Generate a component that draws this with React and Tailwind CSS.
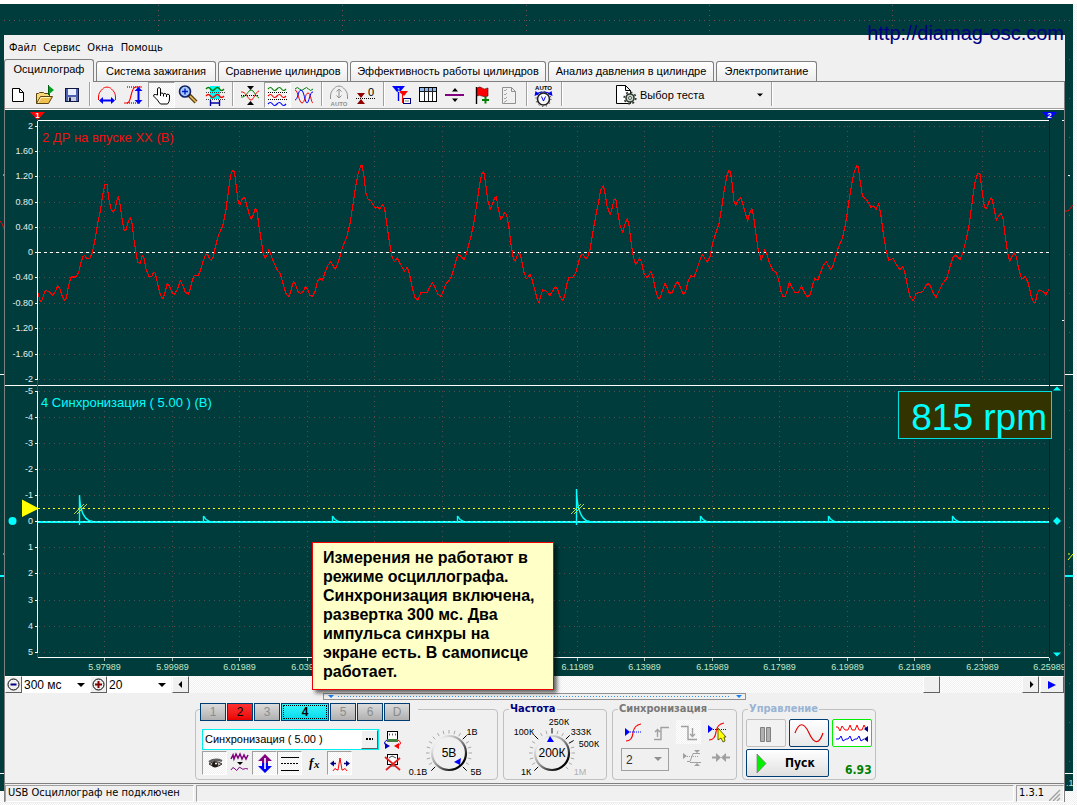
import React from "react";

const TEAL = "#003c3c";
const PATTERN = "bg-[repeating-conic-gradient(#ffffff_0_25%,#f0f0f0_0_50%)] bg-[length:2px_2px]";
const UI = "font-['Liberation_Sans',Arial,sans-serif]";
const TAHOMA = "font-['DejaVu_Sans_Condensed','Noto_Sans',sans-serif]";

/* Intake pressure samples, three consecutive segments at 1/3 px resolution. */
const SEG_A = "114,578 120,603 125,603 131,585 136,571 147,575 158,585 166,575 173,557 180,567 187,590 194,601 199,594 205,560 213,531 227,531 236,517 243,488 249,470 254,467 261,477 270,474 276,460 284,425 293,370 301,332 308,285 315,252 321,254 327,300 333,327 340,338 346,325 351,300 355,290 360,312 366,355 372,390 378,390 384,367 391,352 396,370 402,420 409,465 414,488 420,490 427,467 432,475 438,507 447,530 455,530 461,517 466,520 473,552 481,585 489,596 495,578 502,550 508,558 516,578 524,582 532,568 541,542 548,555 556,577 565,583 571,565 577,540 583,526 594,528 601,512 610,482 617,463 622,463 628,475 634,481 640,470 645,445 655,407 668,378 677,335 685,275 692,225 697,211 703,214 709,260 715,310 720,314 726,298 734,292 740,315 748,343 754,357 760,345 766,325 771,335 778,385 785,430 790,463 796,475 801,465 806,450 812,462 820,485 832,510 841,522 850,555 859,583 867,589 873,572 880,545 886,552 894,575 902,580 910,574 917,559 923,568 930,586 938,589 945,575 952,545 958,535 967,541 973,523 983,497 992,485 999,497 1006,508 1013,490 1020,470";
const SEG_B = "0,470 8,440 20,412 30,370 38,320 46,265 54,222 62,198 67,198 72,230 78,280 84,297 92,302 100,315 107,325 112,320 118,328 122,322 128,313 134,325 140,370 148,425 156,470 163,485 172,474 180,490 193,513 202,502 208,520 216,560 225,592 233,601 243,578 262,576 270,560 277,549 284,560 294,583 302,589 308,578 317,553 332,535 341,508 350,475 356,465 364,470 372,478 379,463 385,438 393,410 402,365 410,315 418,260 425,222 431,214 437,250 443,300 451,328 458,310 464,294 469,290 474,322 482,357 489,348 494,337 500,345 507,385 514,440 520,475 526,484 532,465 538,458 544,475 551,515 559,536 570,524 576,538 585,572 592,600 597,608 603,585 608,570 618,573 630,586 637,575 646,559 653,568 660,590 668,601 674,588 680,553 687,532 698,532 707,520 716,485 724,464 729,463 736,476 743,472 750,448 758,400 766,355 774,315 782,270 790,257 796,285 801,318 811,344 817,322 822,298 827,296 833,335 840,375 848,398 854,375 862,355 867,375 873,425 880,470 887,494 893,485 899,474 905,488 911,520 922,533 932,516 938,527 945,563 953,592 959,598 966,575 975,550 981,562 988,580 997,577 1005,556 1012,544 1020,560 1030,584 1037,575 1045,540 1053,527 1063,530 1070,510 1080,480";
const SEG_C = "0,480 7,463 14,475 22,486 30,470 38,430 48,397 57,370 64,330 72,275 80,230 86,211 91,214 97,255 102,305 107,316 114,302 122,292 128,310 136,340 143,363 149,340 155,325 160,345 167,395 174,445 184,481 189,465 194,448 200,460 208,488 218,510 229,518 236,540 243,575 249,589 256,588 262,570 268,545 275,560 284,577 295,577 305,558 312,575 322,592 331,583 339,550 345,536 353,541 360,522 370,495 379,485 386,498 392,508 398,500 407,470 415,442 427,415 437,370 445,315 453,265 461,222 470,197 475,200 480,240 487,288 498,297 513,322 520,317 528,328 536,310 542,340 550,400 558,450 566,480 580,476 590,495 600,509 608,499 614,515 622,555 630,590 640,602 648,580 668,575 676,560 684,549 692,560 701,583 708,592 717,573 728,550 740,537 750,500 760,470 767,465 780,478 788,460 800,412 808,370 816,310 824,250 833,221 840,222 846,270 853,320 859,326 867,305 875,292 881,320 889,361 896,348 903,340 909,355 916,410 923,460 929,485 936,470 942,459 949,470 956,505 965,538 976,529 985,550 994,590 1000,606 1006,607 1012,580 1018,569 1030,575 1037,585 1047,568";

const UPPER = [["2", 126], ["1.60", 151], ["1.20", 176], ["0.80", 202], ["0.40", 227], ["0", 252], ["-0.40", 277], ["-0.80", 303], ["-1.20", 328], ["-1.60", 354], ["-2", 379]];
const LOWER = [["-5", 391], ["-4", 417], ["-3", 443], ["-2", 469], ["-1", 495], ["0", 521], ["1", 547], ["2", 573], ["3", 600], ["4", 626], ["5", 652]];
/* Time marks; the ones that lie wholly under the note carry no caption. */
const TIMES = [["5.97989", 104], ["5.99989", 172], ["6.01989", 239], ["6.03989", 307], ["", 374], ["", 442], ["", 509], ["6.11989", 577], ["6.13989", 644], ["6.15989", 712], ["6.17989", 779], ["6.19989", 847], ["6.21989", 914], ["6.23989", 982], ["6.25989", 1049]];
const SMALL_PULSES = [203, 332, 457, 700, 828, 952];
const SYNC_PULSES = [[79, 495], [576, 489]];

function Chart() {
  return (
    <svg className="block w-full" viewBox="5 110 1059 566" fontFamily="'Liberation Sans', Arial, sans-serif">
      <rect x="5" y="110" width="1059" height="566" fill={TEAL} />
      <g stroke="#5c4a4a" strokeWidth="1" shapeRendering="crispEdges" strokeDasharray="1 4">
        {[...UPPER, ...LOWER].map(([t, y]) => <path key={t + y} d={`M39 ${y + 0.5}H1049`} />)}
        {TIMES.slice(0, 14).map(([, x]) => <path key={x} d={`M${x + 0.5} 126V380M${x + 0.5} 391V655`} />)}
      </g>
      <g shapeRendering="crispEdges" strokeWidth="1" fill="none">
        <path d="M37.5 120V380M37.5 391V657M37 120.5H1049M5 385.5H1063M37 657.5H1049M1062 120.5h2M1062 320.5h2" stroke="#fff" />
        {[...UPPER, ...LOWER].map(([t, y]) => <path key={t + y} d={`M35 ${y + 0.5}h3`} stroke="#fff" />)}
        {TIMES.map(([, x]) => <path key={x} d={`M${x + 0.5} 658v3`} stroke="#b0c0b0" />)}
        <path d="M37.5 117v4M37.5 380v11M37.5 653v5" stroke="#f00" />
        <path d="M1049.5 118V657" stroke="#0000e0" />
        <path d="M38 252.5H1049" stroke="#fff" strokeDasharray="3 3" />
        <path d="M38 508.5H1049" stroke="#ff0" strokeDasharray="2 3" />
      </g>
      <g fill="none" stroke="#ff0000" shapeRendering="crispEdges">
        {[[0, SEG_A], [340, SEG_B], [700, SEG_C]].map(([dx, pts]) => (
          <g key={dx} transform={`translate(${dx} 100) scale(0.33333)`}><polyline points={pts} strokeWidth="3.4" strokeLinejoin="round" /></g>
        ))}
      </g>
      <path d="M38 522H1049" stroke="#0ff" strokeWidth="2" shapeRendering="crispEdges" />
      <path d="M38 521.5H1049" stroke="#fff" strokeDasharray="2 3" shapeRendering="crispEdges" opacity=".6" />
      {SYNC_PULSES.map(([x, y]) => (
        <g key={x} fill="none">
          <path d={`M${x + 0.5} 525V${y}C${x + 1} 510 ${x + 5} 521 ${x + 14} 521.500`} stroke="#0ff" strokeWidth="1.400" />
          <path d={`M${x - 5} 514l10-10M${x - 2} 514l10-10`} stroke="#c8e850" strokeWidth=".9" />
        </g>
      ))}
      {SMALL_PULSES.map((x) => <path key={x} d={`M${x + 0.5} 522v-6q2 4 6 5.500`} fill="none" stroke="#0ff" strokeWidth="1.400" />)}
      <path d="M22 499.500L39 508.500L22 517z" fill="#ff0" />
      <circle cx="12.500" cy="521" r="4" fill="#0ff" />
      <path d="M1057 517l4 4-4 4-4-4zM1053 390.500l4-4 4 4zM1053 652.500h8l-4 4z" fill="#0ff" />
      <path d="M30 112h15l-7.500 8z" fill="#f00" />
      <path d="M1042 112h15l-7.500 8z" fill="#00f" />
      <g fill="#fff" fontSize="8" fontWeight="bold" textAnchor="middle"><text x="37.500" y="118">1</text><text x="1049.500" y="118">2</text></g>
      <g fill="#e0f0ec" fontSize="9" textAnchor="end">
        {[...UPPER, ...LOWER].map(([t, y]) => <text key={t + y} x="33" y={y + 3}>{t}</text>)}
      </g>
      <g fill="#c0e8c8" fontSize="9" textAnchor="middle">
        {TIMES.filter(([t]) => t).map(([t, x]) => <text key={t} x={x + 0.5} y="670">{t}</text>)}
      </g>
      <text x="42" y="142" fontSize="13" fill="#f01010">2 ДР на впуске ХХ (В)</text>
      <text x="41" y="407" fontSize="13" fill="#0ff">4 Синхронизация ( 5.00 ) (В)</text>
    </svg>
  );
}

const S = ({ w = 27, h = 26, children, className = "" }) => (
  <svg width={w} height={h} viewBox={`0 0 ${w} ${h}`} fill="none" className={`shrink-0 ${className}`}>{children}</svg>
);

function Tool({ label, pressed, children }) {
  return (
    <button aria-label={label} aria-pressed={pressed ? true : undefined}
      className={`h-[26px] w-[27px] shrink-0 ${pressed ? `border border-t-[#a0a0a0] border-l-[#a0a0a0] border-r-white border-b-white ${PATTERN}` : ""}`}>
      <S className={pressed ? "-m-px" : ""}>{children}</S>
    </button>
  );
}
const Sep = () => <div className="mx-[3px] h-6 w-[2px] shrink-0 border-r border-l border-l-[#a0a0a0] border-r-white" />;

const WAVE = (y, a = 3) => `M4 ${y}q2.500 ${-a} 4.500 0t4.500 0 4.500 0 4.500 0`;

function Toolbar() {
  return (
    <div className="flex h-[27px] items-start border-b border-[#a0a0a0] bg-[#f0f0f0]">
      <Tool label="Новый"><path d="M7.500 6.500h7l4 4v9h-11zM14.500 6.500v4h4" fill="#fff" stroke="#000" /></Tool>
      <Tool label="Открыть">
        <path d="M4.500 21.500v-10h2l1-1h4l1 1h5v3" fill="#f8d878" stroke="#5a4410" />
        <path d="M4.500 21.500l4-7h12l-4 7z" fill="#f0c050" stroke="#5a4410" /><path d="M6 21l3-5.500h9" stroke="#fff4c0" />
        <path d="M16 3l6 5-6 5z" fill="#00a020" /><path d="M16.500 3v10" stroke="#006010" />
      </Tool>
      <Tool label="Сохранить">
        <rect x="6.500" y="6.500" width="13" height="13" fill="#5060b0" stroke="#101840" /><rect x="9" y="7" width="8" height="6" fill="#e8f0ff" /><rect x="9" y="15" width="8" height="4" fill="#c8d0e0" /><rect x="10" y="15.500" width="2" height="3.500" fill="#101840" />
      </Tool>
      <Sep />
      <Tool label="Растянуть по времени">
        <path d="M4.500 18v-3c0-4 2-6 4-8 2-2.500 7-2.500 9 0 2 2 4 4 4 8v3" stroke="#f00" /><path d="M7 18.500h12" stroke="#00f" strokeWidth="2" /><path d="M5 18.500l4-3.500v7zM21 18.500l-4-3.500v7z" fill="#00f" />
      </Tool>
      <Tool label="Растянуть по амплитуде">
        <path d="M6 5h14M6 21h14" stroke="#000" strokeDasharray="1 1" /><path d="M3 21h3c5 0 3-16 9-16h6" stroke="#f00" strokeWidth="1.200" /><path d="M17.500 8v11" stroke="#00f" strokeWidth="2" /><path d="M17.500 5l4 4h-8zM17.500 22l4-4h-8z" fill="#00f" />
      </Tool>
      <Tool label="Рука" pressed>
        <path d="M9.500 13V6.500q1.500-2 3 0v5q1.500-1.500 3 .5 1.500-1.500 3 .5 1.500-1 3 .5v4q0 3-2 5h-7q-2-2-3-4l-4-4q0-2 2-1.500z" fill="#fff" stroke="#000" /><path d="M12.500 11v3M15.500 12v2.500M18.500 13v2" stroke="#000" />
      </Tool>
      <Tool label="Лупа">
        <path d="M14 13l7 7" stroke="#604010" strokeWidth="4" /><path d="M15 14l6 6" stroke="#e8c060" strokeWidth="1.600" /><circle cx="10" cy="9.500" r="5.500" fill="#a8c8ff" stroke="#102060" strokeWidth="1.600" /><path d="M7 9.500h6M10 6.500v6" stroke="#0020c0" strokeWidth="1.400" />
      </Tool>
      <Tool label="Измерения">
        <rect x="8" y="4" width="10" height="13" fill="#00f8f8" /><path d={WAVE(7)} stroke="#008000" strokeWidth="1.400" /><path d="M4 10.500h19M4 17.500h19" stroke="#404040" strokeDasharray="1 1" /><path d={WAVE(14)} stroke="#f00" strokeWidth="1.400" /><path d="M8.500 18v6M17.500 18v6M9 21h8" stroke="#0000a0" strokeWidth="1.400" />
      </Tool>
      <Sep />
      <Tool label="Совместить">
        <path d="M4 15c5 1 7-7 10-7s4 6 8 8" stroke="#008000" /><path d="M4 10c5-1 7 8 10 8s4-8 8-9" stroke="#f00" /><path d="M4 13.500h18" stroke="#000" strokeDasharray="1 1" /><path d="M10 4h7l-3.500 4zM10 23h7l-3.500-4z" fill="#000" />
      </Tool>
      <Tool label="Разнести" pressed>
        <path d={WAVE(7)} stroke="#008000" strokeWidth="1.200" /><path d={WAVE(14)} stroke="#f00" strokeWidth="1.200" /><path d={WAVE(22)} stroke="#00f" strokeWidth="1.200" /><path d="M4 10.500h19M4 17.500h19" stroke="#000" strokeDasharray="1 1" />
      </Tool>
      <Tool label="Наложить">
        <path d={WAVE(7)} stroke="#008000" /><path d="M4 8c3 0 4 13 7 13s3-10 6-10 3 10 5 10" stroke="#f00" /><path d="M4 18c3 0 3-10 6-10s4 13 6 13 3-12 6-11" stroke="#00f" />
      </Tool>
      <Sep />
      <Tool label="Автомасштаб">
        <path d="M4.500 17v-3c0-4 2-6 4-8 2-2.500 7-2.500 9 0 2 2 4 4 4 8v3M13 7v9M10.500 9.500L13 7l2.500 2.500M10.500 13.500L13 16l2.500-2.500" stroke="#909090" />
        <text x="13" y="24" fontSize="6" fontWeight="bold" textAnchor="middle" fill="#909090" fontFamily="Liberation Sans">AUTO</text>
      </Tool>
      <Tool label="Установить ноль">
        <path d="M3 16.500h19" stroke="#000" strokeDasharray="1 1" /><path d="M4 11h8l-4 5zM4 22h8l-4-5z" fill="#900000" /><text x="15" y="14" fontSize="11" fill="#000" fontFamily="Liberation Sans">0</text>
      </Tool>
      <Sep />
      <Tool label="Маркеры">
        <path d="M4 4h13l-5 6H9z" fill="#00f" /><path d="M10.500 5v14" stroke="#00f" strokeWidth="1.400" /><path d="M10 9h10l-4 5z" fill="#f00" /><path d="M14.500 10v11" stroke="#f00" /><text x="9" y="10" fontSize="6" fill="#fff" fontFamily="Liberation Sans">1</text><rect x="15.500" y="16.500" width="7" height="5" fill="#fff" stroke="#000080" /><path d="M17 19h4" stroke="#808080" />
      </Tool>
      <Tool label="Таблица">
        <rect x="4.500" y="5.500" width="17" height="14" fill="#fff" stroke="#000" /><rect x="5" y="6" width="16" height="3" fill="#90b8f0" /><path d="M5 9.500h16M9.500 6v13M13.500 6v13M17.500 6v13" stroke="#202020" />
      </Tool>
      <Tool label="Линия"><path d="M3 13h19" stroke="#800080" strokeWidth="2" /><path d="M13 6l3 3.500h-6zM13 20l3-3.500h-6z" fill="#000" /></Tool>
      <Tool label="Флаг">
        <path d="M7.500 5v17" stroke="#000" strokeWidth="1.400" /><path d="M8 6q3-2 5 0t6 0v8q-3 1.500-6 0t-5 0z" fill="#f00" stroke="#600000" strokeWidth=".6" /><path d="M13 18h7M16.500 14.500v7" stroke="#008000" strokeWidth="2" />
      </Tool>
      <Tool label="Отчёт"><path d="M6.500 5.500h9l4 4v12h-13zM15.500 5.500v4h4" stroke="#909090" /><path d="M8 8l1 1 2-2M8 12l1 1 2-2M8 16l1 1 2-2M8 20l1 0 2-2" stroke="#909090" strokeWidth=".8" /></Tool>
      <Sep />
      <Tool label="Авто">
        <text x="12.500" y="8" fontSize="6" fontWeight="bold" textAnchor="middle" fill="#000" fontFamily="Liberation Sans">AUTO</text>
        <path d="M5 12q7.500-4 15 0" stroke="#00f" strokeWidth="1.200" /><path d="M3.500 14l1-5 4 3zM21.500 14l-1-5-4 3z" fill="#00f" /><circle cx="12.500" cy="17" r="6" fill="#f8f8f8" stroke="#202020" strokeWidth="1.600" /><circle cx="12.500" cy="17" r="7.500" stroke="#202020" strokeDasharray="1 3" /><path d="M10.500 14.500l2 4.500 2-4.500" stroke="#00f" />
      </Tool>
      <Sep />
      <button className={`flex h-[26px] w-[202px] items-center pl-[47px] text-[11px] text-black ${UI}`}>
        <S w={27} h={26}>
          <path d="M3.500 3.500h9l5 5v13h-14zM12.500 3.500v5h5" fill="#fff" stroke="#000" /><circle cx="17" cy="16" r="4" fill="#c8d8c8" stroke="#303830" strokeWidth="1.600" /><circle cx="17" cy="16" r="5.800" stroke="#303830" strokeWidth="1.600" strokeDasharray="2 2.500" /><circle cx="17" cy="16" r="1.500" fill="#fff" stroke="#303830" strokeWidth=".8" />
        </S>
        <span className="grow pt-px text-left whitespace-nowrap">Выбор теста</span>
        <S w={14} h={6}><path d="M3 1.500h6l-3 3z" fill="#000" /></S>
      </button>
      <Sep />
    </div>
  );
}

const TABS = [
  ["Осциллограф", "w-[90px]"], ["Система зажигания", "w-[120px]"], ["Сравнение цилиндров", "w-[130px]"],
  ["Эффективность работы цилиндров", "w-[196px]"], ["Анализ давления в цилиндре", "w-[166px]"], ["Электропитание", "w-[101px]"],
];

const RAISED = "border border-t-white border-l-white border-r-[#606060] border-b-[#606060] bg-[#f0f0f0]";

function Combo({ label, value, className }) {
  return (
    <div className={`relative h-[17px] bg-white ${className}`}>
      <select aria-label={label} className={`block h-[17px] w-full appearance-none bg-white pl-[2px] text-[12px] leading-[16px] text-black ${UI}`}><option>{value}</option></select>
      <svg className="pointer-events-none absolute top-[7px] right-[5px]" width="8" height="5"><path d="M0 0h8L4 4z" fill="#000" /></svg>
    </div>
  );
}

function ScrollRow() {
  return (
    <div className={`flex h-[17px] items-stretch ${PATTERN}`}>
      <button aria-label="Уменьшить развертку" className={`w-[17px] ${RAISED}`}><S w={15} h={15}><circle cx="7.500" cy="7.500" r="5.500" stroke="#000" /><path d="M4.500 7.500h6" stroke="#000080" strokeWidth="2" /></S></button>
      <Combo label="Развертка" value="300 мс" className="w-[68px]" />
      <button aria-label="Увеличить развертку" className={`w-[17px] ${RAISED}`}><S w={15} h={15}><circle cx="7.500" cy="7.500" r="5.500" stroke="#000" /><path d="M4 7.500h7M7.500 4v7" stroke="#800000" strokeWidth="2" /></S></button>
      <Combo label="Масштаб" value="20" className="mr-px w-[64px]" />
      <button aria-label="Назад" className={`w-[17px] ${RAISED}`}><S w={15} h={15}><path d="M9 4v7L5.500 7.500z" fill="#000" /></S></button>
      <div className="grow" />
      <button aria-label="Ползунок" className={`w-[17px] ${RAISED}`} />
      <div className="w-[82px]" />
      <button aria-label="Вперёд" className={`w-[17px] ${RAISED}`}><S w={15} h={15}><path d="M7 4v7l3.500-3.500z" fill="#000" /></S></button>
      <button aria-label="Воспроизвести" className={`ml-px w-6 ${RAISED}`}><S w={22} h={15}><path d="M7 4v8l8-4z" fill="#00f" /></S></button>
    </div>
  );
}

function Splitter() {
  return (
    <div className="flex h-[10px] pl-[318px]">
      <svg width="423" height="7" fill="none"><rect x=".5" y=".5" width="422" height="6" fill="#f0f0f0" stroke="#909090" /><path d="M15 3.500H408" stroke="#3090f0" strokeDasharray="1 2" /><path d="M5 2h6l-3 3zM413 2h6l-3 3z" fill="#1880f0" /></svg>
    </div>
  );
}

const CH_BASE = "h-[18px] border border-[#003c74] text-[12px] leading-4";
const CH_OFF = "w-[26px] bg-linear-to-b from-[#dcdcdc] to-[#b0b0b0] text-[#8c8c8c]";

function Knob({ w, cx, cy, value, dark, labels, pointer }) {
  const ticks = Array.from({ length: 19 }, (_, i) => -225 + i * 15);
  return (
    <svg width={w} height="64" viewBox={`0 0 ${w} 64`} className="block shrink-0" fill="none" fontFamily="'Liberation Sans', Arial, sans-serif">
      <defs><linearGradient id={`k${w}`} x1="0" y1="0" x2="1" y2="1"><stop offset=".15" stopColor="#f0f0f0" /><stop offset=".5" stopColor="#909090" /><stop offset=".85" stopColor="#000" /></linearGradient></defs>
      {ticks.map((a) => {
        const r = (a * Math.PI) / 180;
        const on = dark.includes(a);
        return <path key={a} stroke={on ? "#000" : "#a8a8a8"} d={`M${cx + 19.5 * Math.cos(r)} ${cy + 19.5 * Math.sin(r)}L${cx + (on ? 25 : 23) * Math.cos(r)} ${cy + (on ? 25 : 23) * Math.sin(r)}`} />;
      })}
      <circle cx={cx} cy={cy} r="17" fill="#f0f0f0" stroke={`url(#k${w})`} strokeWidth="2.200" />
      <path d={pointer} fill="#00f" />
      <text x={cx} y={cy + 4} fontSize="12" textAnchor="middle" fill="#000">{value}</text>
      {labels.map(([t, x, y, c]) => <text key={t} x={x} y={y} fontSize="9" textAnchor="middle" fill={c || "#000"}>{t}</text>)}
    </svg>
  );
}

function Mini({ label, pressed, flat, children }) {
  const look = pressed ? `border border-t-[#a0a0a0] border-l-[#a0a0a0] border-r-white border-b-white ${PATTERN}` : flat ? PATTERN : "";
  return (
    <button aria-label={label} className={`h-6 w-[25px] ${look}`}>
      <S w={25} h={24} className={pressed ? "-m-px" : ""}>{children}</S>
    </button>
  );
}

const GROUP = "h-[77px] min-w-0 shrink-0 rounded border border-[#c0c0c0] p-0";
const LEGEND = `ml-[5px] h-3 px-px text-[11px] leading-3 font-bold ${TAHOMA}`;

function Panel() {
  return (
    <div className="flex h-[80px] items-start gap-[5px] pl-[190px]">
      <fieldset className={`${GROUP} w-[303px]`}>
        <legend className={`ml-1 flex h-3 w-[218px] items-start gap-px ${UI}`}>
          <button className={`${CH_BASE} ${CH_OFF}`}>1</button>
          <button className={`${CH_BASE} w-[26px] bg-linear-to-b from-[#ff3030] to-[#e80000] text-black`}>2</button>
          <button className={`${CH_BASE} ${CH_OFF}`}>3</button>
          <button className={`${CH_BASE} w-[48px] bg-linear-to-b from-[#30f8ff] to-[#00d8e8] font-bold text-black outline-1 -outline-offset-3 outline-dotted outline-black`}>4</button>
          <button className={`${CH_BASE} ${CH_OFF}`}>5</button>
          <button className={`${CH_BASE} ${CH_OFF}`}>6</button>
          <button className={`${CH_BASE} ${CH_OFF}`}>D</button>
        </legend>
        <div className="flex pl-[6px]">
          <div className="w-[177px] pt-[14px]">
            <div className="flex h-[21px] border border-[#00f0f0] bg-white">
              <input aria-label="Имя канала" defaultValue="Синхронизация ( 5.00 )" className={`min-w-0 grow bg-white pl-[2px] text-[11px] text-black ${UI}`} />
              <button aria-label="Выбрать" className={`w-[17px] ${RAISED}`}><S w={15} h={17}><path d="M4 8h7" stroke="#000" strokeWidth="2" strokeDasharray="2 1" /></S></button>
            </div>
            <div className="mt-px flex">
              <Mini label="Показать" pressed><path d="M7 13q6-5 13 0-6 5-13 0z" fill="#c0b0a8" stroke="#303030" /><path d="M7 11q6-4 13-1" stroke="#606060" strokeWidth="2.400" /><circle cx="13" cy="13.500" r="3" fill="#201818" /><circle cx="14" cy="12.500" r="1" fill="#fff" /></Mini>
              <Mini label="Фильтр"><path d="M4 8l2-4 1 4 2-5 2 4 2-4 2 5 2-4 2 4 2-4" stroke="#800080" strokeWidth="1.500" /><path d="M10 11h6l-3 3z" fill="#000" /><path d="M4 19q2-4 4-1t3 0 3-1 3 1 4 0" stroke="#800080" /></Mini>
              <Mini label="Инверсия" pressed><path d="M13 3l7 7h-4v3h-6v-3H6z" fill="#800080" /><path d="M13 22l7-7h-4v-3h-6v3H6z" fill="#00f" /><path d="M13 7v11" stroke="#fff" strokeWidth="1.600" /></Mini>
              <Mini label="Линии" pressed><path d="M4 6.500h18M4 19.500h18" stroke="#000" /><path d="M4 12.500h18" stroke="#000" strokeDasharray="2 1" /></Mini>
              <Mini label="Функция"><text x="7" y="16" fontSize="13" fontStyle="italic" fontWeight="bold" fill="#000" fontFamily="Liberation Serif">f</text><text x="12" y="17" fontSize="11" fontStyle="italic" fontWeight="bold" fill="#000" fontFamily="Liberation Serif">x</text></Mini>
              <Mini label="Импульс" pressed><path d="M6 20q2-4 4-1h1l2-12 2 12h1q2-3 4 1" stroke="#f00" /><path d="M5 12.500h4M17 12.500h4" stroke="#000080" strokeWidth="1.400" /><path d="M3 12.500l4-3v6zM23 12.500l-4-3v6z" fill="#000080" /></Mini>
            </div>
          </div>
          <div className="ml-[4px] flex w-5 flex-col gap-[3px] pt-[14px]">
            <button aria-label="Обменять"><S w={20} h={21}><rect x="4.500" y="2.500" width="10" height="9" fill="#fff" stroke="#000" /><path d="M6.500 4.500v2M9.500 4.500v2M12.500 4.500v2" stroke="#606060" /><rect x="4" y="10" width="11" height="3" fill="#408040" /><path d="M4 11q-5 3 0 6" stroke="#0000c0" /><path d="M2 14.500v6l5-3z" fill="#0000c0" transform="translate(0 -.500)" /><path d="M15 11q5 3 0 6" stroke="#f00" /><path d="M16 14v6l-5-3z" fill="#f00" /></S></button>
            <button aria-label="Удалить датчик"><S w={20} h={18}><rect x="4.500" y="1.500" width="10" height="10" fill="#fff" stroke="#000" /><path d="M6 5l3-2 4 2M7 13h6" stroke="#404040" /><path d="M2 4l15 13M17 5L3 17" stroke="#e02020" strokeWidth="1.800" /></S></button>
          </div>
          <Knob w={93} cx={46} cy={38} value="5В" dark={[-225, -45, 45]} pointer="M58 43l-1 7-6-3z" labels={[["1В", 69, 20], ["0.1В", 15, 60], ["5В", 73, 60]]} />
        </div>
      </fieldset>
      <fieldset className={`${GROUP} w-[104px]`}>
        <legend className={`${LEGEND} text-[#000080]`}>Частота</legend>
        <Knob w={102} cx={48} cy={38} value="200К" dark={[-225, -135, -90, -45, -30]} pointer="M46 21l4 6h-7z" labels={[["100К", 20, 20], ["250К", 55, 10], ["333К", 77, 20], ["500К", 85, 32], ["1К", 22, 60], ["1М", 76, 60, "#b0b0b0"]]} />
      </fieldset>
      <fieldset className={`${GROUP} w-[125px]`}>
        <legend className={`${LEGEND} text-[#787878]`}>Синхронизация</legend>
        <div className="flex gap-[3px] pt-[5px] pl-[7px]">
          <Mini label="Уровень"><path d="M6 21q6 0 7-8t8-9" stroke="#f00" strokeWidth="1.200" /><path d="M5 8v8l5-4z" fill="#00f" /><path d="M10 12h11" stroke="#00f" strokeDasharray="1 1" /></Mini>
          <Mini label="Фронт"><path d="M6 19.500h7v-12h8M9.500 17v-7M7 12l2.500-2.500L12 12" stroke="#a0a0a0" strokeWidth="1.400" /></Mini>
          <Mini label="Спад" flat><path d="M5 6.500h7v13h9M16.500 8v8M14 14l2.500 2.500L19 14" stroke="#a0a0a0" strokeWidth="1.400" /></Mini>
          <Mini label="Выбрать уровень"><path d="M5 20q6 0 7-8t8-9" stroke="#f00" strokeWidth="1.200" /><path d="M4 5v8l5-4z" fill="#00f" /><path d="M9 9.500h13" stroke="#00f" strokeDasharray="1 1" /><path d="M14 8v12l3-2 2 4 2-1-1-4h2z" fill="#ff0" stroke="#404000" strokeWidth=".8" /></Mini>
        </div>
        <div className="flex gap-[3px] pt-1 pl-2">
          <div className="relative mr-2 h-[23px] w-12">
            <select aria-label="Канал синхронизации" className={`block h-[23px] w-full appearance-none border border-[#a0a0a0] bg-[#f0f0f0] pl-1 text-[12px] leading-[18px] text-[#303030] ${UI}`}><option>2</option></select>
            <svg className="pointer-events-none absolute top-[9px] right-[7px]" width="8" height="5"><path d="M0 0h8L4 4z" fill="#909090" /></svg>
          </div>
          <Mini label="Порог"><path d="M3 5v6l4-3zM14 2h6l-3 3zM14 18h6l-3-3z" fill="#a0a0a0" /><path d="M7 8.500h11" stroke="#a0a0a0" strokeDasharray="1 1" /><path d="M7 13.500h3l3-8h7M10 14.500h11" stroke="#a0a0a0" /></Mini>
          <Mini label="Сжать"><path d="M4 9.500h5M17 9.500h5" stroke="#a0a0a0" strokeWidth="2" /><path d="M8 5v9l5-4.500zM18 5v9l-5-4.500z" fill="#a0a0a0" /></Mini>
        </div>
      </fieldset>
      <fieldset className={`${GROUP} w-[134px]`}>
        <legend className={`${LEGEND} text-[#9ab4d4]`}>Управление</legend>
        <div className="flex gap-[3px] pt-1 pl-[3px]">
          <button aria-label="Пауза" className="h-7 w-10 rounded-xs border border-[#c0c0c0] bg-[#f2f2f2]"><S w={38} h={26}><path d="M13.500 7.500h4v14h-4zM19.500 7.500h4v14h-4z" fill="#b0b0b0" stroke="#808080" /></S></button>
          <button aria-label="Осциллограф" className="h-7 w-10 rounded-xs border border-[#003c74] bg-linear-to-b from-white to-[#e8e8e8]"><S w={38} h={26}><path d="M5 13C9 2 14 2 19 13s10 12 14 0" stroke="#e00000" strokeWidth="1.200" /></S></button>
          <button aria-label="Самописец" className="h-7 w-10 rounded-xs border border-[#00f000] bg-white"><S w={38} h={26}><path d="M3 7h2l2 4 2-5 3 4h3l2-5 2 5h3l2-5 2 5h3l2-5 2 4" stroke="#f00" /><path d="M3 19h3l2-3 2 5 3-2h2l2-3 2 5 3-2h2l2-3 2 5 3-2" stroke="#00f" /><path d="M35 6v6l-4-3zM35 16v6l-4-3z" fill="#000080" /></S></button>
        </div>
        <div className="flex items-end gap-4 pt-[2px] pl-[3px]">
          <button className={`flex h-7 w-[83px] items-center rounded-xs border border-[#003c74] bg-linear-to-b from-white to-[#e0e0e0] text-[12px] font-bold text-black ${TAHOMA}`}><S w={38} h={26}><path d="M10 4v19l9-9.500z" fill="#00f000" stroke="#808080" strokeWidth=".8" /></S>Пуск</button>
          <span className={`text-[12px] leading-[14px] font-bold text-[#008000] ${TAHOMA}`}>6.93</span>
        </div>
      </fieldset>
    </div>
  );
}

function StatusBar() {
  const cell = "h-[17px] border border-t-[#a0a0a0] border-l-[#a0a0a0] border-r-white border-b-white px-[2px]";
  return (
    <footer className={`flex gap-[2px] border-t border-[#808080] bg-[#f0f0f0] pt-px text-[11px] leading-[14px] text-black ${TAHOMA}`}>
      <div className={`${cell} w-[189px] whitespace-nowrap`}>USB Осциллограф не подключен</div>
      <div className={`${cell} grow`} />
      <div className={`${cell} flex w-[48px] justify-between`}>1.3.1<S w={12} h={15}><path d="M0 15L11 4M4 15l7-7M8 15l3-3" stroke="#a0a0a0" strokeWidth="1.400" /></S></div>
    </footer>
  );
}

export default function App() {
  return (
    <div className={`min-h-screen bg-white ${PATTERN}`}>
      <div className="h-1 bg-white" />
      <header className="relative mr-1 h-[31px] bg-[#003c3c]">
        <svg className="block h-full w-full" shapeRendering="crispEdges">
          <path d="M4 16.500H1070M158.500 1V31M342.500 1V31M526.500 1V31M709.500 1V31M892.500 1V31" stroke="#705050" strokeDasharray="1 4" />
        </svg>
        <a href="http://diamag-osc.com" className={`absolute top-[18px] right-[9px] text-[20px] leading-[22px] text-[#000080] ${UI}`}>http://diamag-osc.com</a>
      </header>
      <div className="flex">
        <svg className="mb-3 h-[756px] w-1 shrink-0 bg-[#003c3c]" viewBox="0 35 4 756" fill="none"><path d="M0 221q3 3 4 8" stroke="#f00" /><path d="M0 374.500h4M3 175h1M0 773.500h4" stroke="#fff" /><path d="M0 576h4" stroke="#0ff" strokeWidth="2" /><path d="M3 554h1" stroke="#ff0" /></svg>
        <div className="min-w-0 grow bg-[#f0f0f0]">
          <nav className={`flex h-[24px] items-end gap-[7px] pl-[5px] text-[11px] leading-5 text-black ${TAHOMA}`}>
            {["Файл", "Сервис", "Окна", "Помощь"].map((m) => <button key={m} className="h-[22px]">{m}</button>)}
          </nav>
          <div role="tablist" className={`flex h-[23px] items-end gap-[2px] border-b border-[#808080] text-[11px] text-black ${UI}`}>
            {TABS.map(([t, w], i) => (
              <button key={t} role="tab" aria-selected={i === 0}
                className={`${w} shrink-0 rounded-t-[3px] border border-b-0 border-[#808080] whitespace-nowrap ${i === 0 ? "-mb-px h-[23px] bg-[#f0f0f0] pb-1" : "h-[20px] bg-linear-to-b from-white to-[#ececec]"}`}>{t}</button>
            ))}
          </div>
          <main className="border-x border-[#808080]">
            <Toolbar />
            <section className="relative border-t border-white">
              <Chart />
              <output className={`absolute top-[281px] right-3 flex h-[48px] w-[154px] items-center justify-end border border-[#00e0e0] bg-[#333300] pt-1 pr-1 text-[37px] leading-none text-[#0ff] ${UI}`}>815 rpm</output>
              <p className={`absolute top-[432px] left-[307px] z-10 h-[148px] w-[242px] border border-[#f00000] bg-[#ffffc8] pt-[5px] pl-[10px] text-[16px] leading-[19px] font-bold whitespace-nowrap text-black shadow-[3px_3px_4px_rgba(0,0,0,0.6)] ${UI}`}>
                Измерения не работают в<br />режиме осциллографа.<br />Синхронизация включена,<br />развертка 300 мс. Два<br />импульса синхры на<br />экране есть. В самописце<br />работает.
              </p>
            </section>
            <ScrollRow />
            <Splitter />
            <Panel />
            <StatusBar />
          </main>
        </div>
        <svg className="mr-1 mb-3 h-[756px] w-2 shrink-0 bg-[#003c3c]" viewBox="0 35 8 756" fill="none"><path d="M4.500 59V780" stroke="#705050" strokeDasharray="1 38" /><path d="M0 211h3l5-6" stroke="#f00" /><path d="M3 175.500h2M0 374.500h8M0 773.500h8" stroke="#fff" /><path d="M0 576h8" stroke="#0ff" strokeWidth="2" /><path d="M3 560l5-6M3 554h2" stroke="#ff0" /><text x="1" y="786" fontSize="9" fill="#c0e8c8" fontFamily="Liberation Sans">.1</text></svg>
      </div>
    </div>
  );
}
